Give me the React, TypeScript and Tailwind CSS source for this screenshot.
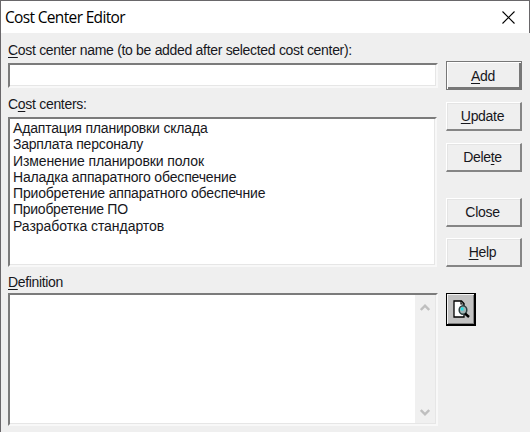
import type { ReactNode } from "react";

const centers = [
  { name: "Адаптация планировки склада", spacing: "tracking-[-0.18px]" },
  { name: "Зарплата персоналу", spacing: "tracking-[-0.22px]" },
  { name: "Изменение планировки полок", spacing: "tracking-[-0.11px]" },
  { name: "Наладка аппаратного обеспечение", spacing: "tracking-[-0.16px]" },
  { name: "Приобретение аппаратного обеспечние", spacing: "tracking-[-0.17px]" },
  { name: "Приобретение ПО", spacing: "tracking-[-0.27px]" },
  { name: "Разработка стандартов", spacing: "tracking-[-0.05px]" },
];

const sunken =
  "border-2 border-t-[#7b7b7b] border-l-[#7b7b7b] border-r-[#f8f8f8] border-b-[#f8f8f8] bg-white shadow-[inset_-1px_-1px_0_#e6e6e6]";

function Key({ children }: { children: ReactNode }) {
  return <span className="underline decoration-1 underline-offset-2">{children}</span>;
}

function PushButton({ children, primary, className = "" }: { children: ReactNode; primary?: boolean; className?: string }) {
  return (
    <button
      className={`flex h-[29px] w-[76px] shrink-0 items-center justify-center pr-0.5 text-[14px] leading-4 tracking-[-0.3px] ${
        primary
          ? "border border-[#777] shadow-[inset_1px_1px_0_#fff,inset_-2px_-2px_0_#777]"
          : "border-t border-l border-r-2 border-b-2 border-t-white border-l-white border-r-[#858585] border-b-[#858585] shadow-[inset_1px_1px_0_#e4e4e4]"
      } ${className}`}
    >
      {children}
    </button>
  );
}

export default function App() {
  return (
    <div className="flex h-[432px] w-[530px] flex-col overflow-hidden border-t border-l border-[#69676a] bg-[#efefef] font-['Liberation_Sans',Arial,sans-serif] text-[14px] text-[#17171c]">
      <header className="flex h-8 shrink-0 items-center justify-between border-r border-[#69676a] bg-white pr-[14px] pl-1">
        <h1 className="pb-px font-['Open_Sans','Noto_Sans',sans-serif] text-[15.5px] leading-5 tracking-[-0.66px] text-black">Cost Center Editor</h1>
        <svg width="13" height="13" viewBox="0 0 13 13" fill="none" stroke="#000" strokeWidth="1.1">
          <path d="M.5.5l12 12M12.5.5l-12 12" />
        </svg>
      </header>
      <main className="flex min-h-0 flex-1 pl-[7px]">
        <div className="flex w-[430px] flex-col pt-[9px]">
          <label className="h-[21px] text-[14px] leading-4 tracking-[-0.31px] whitespace-nowrap">
            <Key>C</Key>ost center name (to be added after selected cost center):
          </label>
          <input className={`h-[25px] w-full rounded-none outline-none ${sunken}`} />
          <label className="mt-2 h-[21px] leading-4 tracking-[-0.3px]">
            C<Key>o</Key>st centers:
          </label>
          <ul className={`h-[150px] w-[429px] pt-px pl-[3px] ${sunken}`}>
            {centers.map((c) => (
              <li key={c.name} className={`h-[16.25px] leading-[16.25px] whitespace-nowrap ${c.spacing}`}>
                {c.name}
              </li>
            ))}
          </ul>
          <label className="mt-[7px] h-[19px] leading-4 tracking-[-0.35px]">
            <Key>D</Key>efinition
          </label>
          <div className={`flex h-[133px] justify-end ${sunken}`}>
            <div className="mr-px mb-px flex w-[20px] flex-col items-center justify-between bg-[#f0f0f0] pt-2 pb-1.5">
              <svg width="10" height="9" viewBox="0 0 10 9" fill="none" stroke="#bfbfbf" strokeWidth="2.5">
                <path d="M.8 7L5 2.7 9.2 7" />
              </svg>
              <svg width="10" height="9" viewBox="0 0 10 9" fill="none" stroke="#bfbfbf" strokeWidth="2.5">
                <path d="M.8 2L5 6.3 9.2 2" />
              </svg>
            </div>
          </div>
        </div>
        <div className="ml-2 flex w-[76px] flex-col pt-7">
          <PushButton primary><span><Key>A</Key>dd</span></PushButton>
          <PushButton className="mt-3"><span><Key>U</Key>pdate</span></PushButton>
          <PushButton className="mt-3"><span>Dele<Key>t</Key>e</span></PushButton>
          <PushButton className="mt-[26px]">Close</PushButton>
          <PushButton className="mt-[11px]"><span><Key>H</Key>elp</span></PushButton>
          <button className="mt-[26px] flex h-[33px] w-[30px] shrink-0 items-center justify-center border border-r-2 border-b-2 border-black bg-[#c2c2c2] shadow-[inset_1px_1px_0_#f4f4f4,inset_-1px_-1px_0_#808080]">
            <svg width="19" height="20" viewBox="0 0 19 20" fill="none">
              <path d="M3 2h7.5L13 4.500V18H3z" fill="#fff" stroke="#000" strokeWidth="1.3" />
              <path d="M10 2v3h3" stroke="#000" strokeWidth="1.2" />
              <ellipse cx="12" cy="11" rx="3.8" ry="4.300" fill="#9fb3b3" stroke="#2c3f40" strokeWidth="1.5" />
              <path d="M9.8 8.500h2.700v3h-2.700z" fill="#20dfe6" />
              <path d="M14 14.500l4 3.500" stroke="#000" strokeWidth="2.4" />
            </svg>
          </button>
        </div>
      </main>
    </div>
  );
}
